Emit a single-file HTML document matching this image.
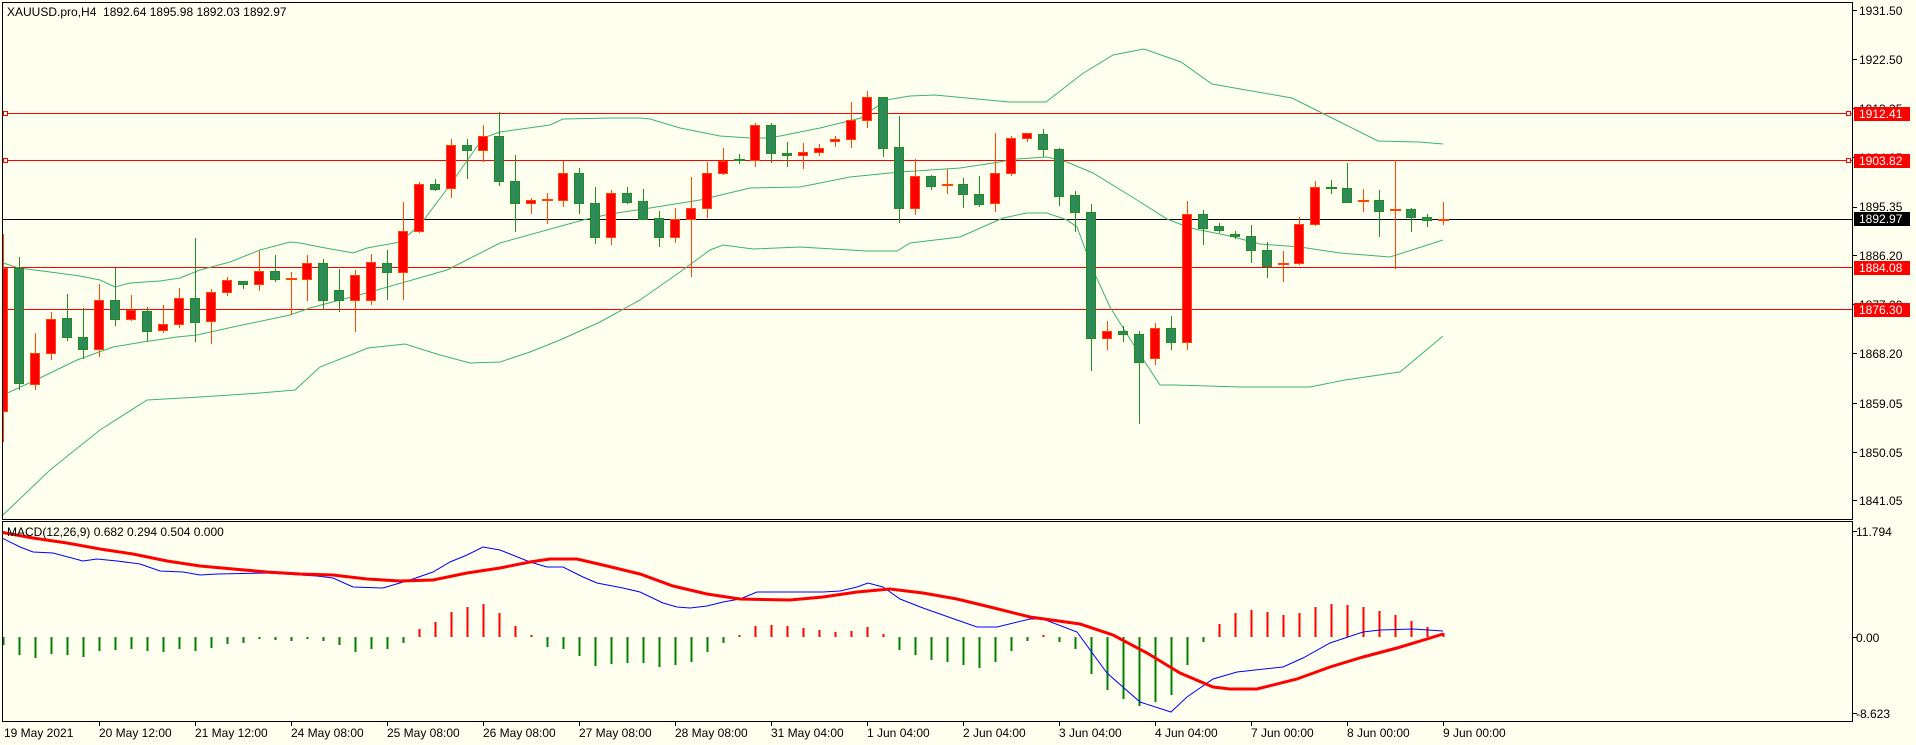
<!DOCTYPE html>
<html><head><meta charset="utf-8"><style>
html,body{margin:0;padding:0;background:#FFFFF0;width:1916px;height:745px;overflow:hidden}
svg{display:block}
text{font-family:"Liberation Sans",Tahoma,sans-serif;font-size:12px;fill:#000}
</style></head><body>
<svg width="1916" height="745" viewBox="0 0 1916 745" xmlns="http://www.w3.org/2000/svg" shape-rendering="crispEdges">
<defs>
<clipPath id="cm"><rect x="3" y="3" width="1849" height="516"/></clipPath>
<clipPath id="cd"><rect x="3" y="522" width="1849" height="199"/></clipPath>
</defs>
<rect width="1916" height="745" fill="#FFFFF0"/>

<g clip-path="url(#cm)">
<g stroke="#FF0000" stroke-width="1">
<path d="M2 113.5H1852M2 160.5H1852M2 267.5H1852M2 309.5H1852"/>
</g>
<path d="M2 219.5H1852" stroke="#000" stroke-width="1"/>
<g fill="none" stroke="#FF0000">
<rect x="3.5" y="111.5" width="4" height="4" fill="#FFFFF0"/>
<rect x="3.5" y="158.5" width="4" height="4" fill="#FFFFF0"/>
<rect x="3.5" y="307.5" width="4" height="4" fill="#fff"/>
<rect x="1846.5" y="111.5" width="4" height="4" fill="#FFFFF0"/>
<rect x="1846.5" y="158.5" width="4" height="4" fill="#FFFFF0"/>
</g>

<g fill="none" stroke="#3CB371" stroke-width="1" shape-rendering="auto">
<polyline points="3,263 19,268 50,272 80,276 100,280 115,287 130,283 160,281 180,278 200,270 230,262 260,250 290,242 300,243 320,247 353,253 367,248 400,242 420,225 450,185 483,138 500,132 550,125 563,119 610,118 640,118 650,119 680,128 700,132 720,136 750,138 770,138 790,134 820,128 861,118 886,100 910,96 935,95 1009,102 1046,102 1082,74 1113,55 1144,49 1181,62 1212,84 1292,98 1322,113 1378,141 1420,142 1443,144"/>
<polyline points="3,395 40,378 77,360 113,347 143,342 177,337 197,335 233,327 290,315 310,308 370,292 447,270 500,243 583,220 610,214 650,208 700,200 750,188 800,187 850,177 900,172 960,168 993,163 1017,159 1047,157 1067,162 1093,173 1137,200 1167,219 1190,228 1230,236 1260,244 1300,247 1340,253 1390,257 1443,240"/>
<polyline points="3,515 50,470 100,430 147,400 200,397 260,393 295,390 320,367 368,348 405,344 440,355 470,363 500,362 530,352 560,340 600,322 640,300 680,272 710,250 723,245 753,249 800,247 867,251 897,251 910,243 960,237 1003,218 1027,213 1047,213 1067,220 1077,227 1093,270 1110,307 1137,350 1160,385 1175,385 1240,387 1310,387 1345,380 1400,372 1443,336"/>
</g>

<path fill="none" stroke="#FF4500" stroke-width="1" d="M3.5 234V442M35.5 333V390M51.5 312V360M99.5 284V357M131.5 295V321M163.5 305V333M179.5 288V328M211.5 289V344M227.5 277V296M259.5 251V291M291.5 272V315M307.5 255V301M355.5 270V332M371.5 254V305M403.5 202V300M419.5 182V233M451.5 139V198M483.5 125V162M531.5 198V214M547.5 193V224M563.5 161V207M611.5 190V245M675.5 208V243M691.5 177V277M707.5 162V218M723.5 148V175M755.5 123V167M803.5 143V169M819.5 144V156M835.5 136V147M851.5 102V148M867.5 91V128M915.5 159V215M947.5 169V194M995.5 133V212M1011.5 136V176M1027.5 133V142M1107.5 321V350M1155.5 323V365M1187.5 201V350M1283.5 251V282M1299.5 217V265M1315.5 181V226M1363.5 189V212M1395.5 160V269M1443.5 202V225"/>
<path fill="none" stroke="#228B22" stroke-width="1" d="M19.5 257V390M67.5 294V341M83.5 308V359M115.5 268V326M147.5 307V341M195.5 238V342M243.5 281V289M275.5 255V282M323.5 259V310M339.5 269V312M387.5 250V300M435.5 179V191M467.5 139V179M499.5 112V186M515.5 155V232M579.5 168V214M595.5 187V244M627.5 187V204M643.5 189V219M659.5 211V247M739.5 154V164M771.5 123V163M787.5 142V167M883.5 97V157M899.5 116V223M931.5 175V190M963.5 178V208M979.5 176V207M1043.5 129V157M1059.5 148V206M1075.5 191V232M1091.5 204V371M1123.5 326V342M1139.5 331V424M1171.5 316V350M1203.5 210V245M1219.5 223V233M1235.5 231V239M1251.5 225V263M1267.5 242V278M1331.5 180V194M1347.5 163V203M1379.5 190V237M1411.5 208V232M1427.5 214V227"/>

<g fill="#FF0000" stroke="#FF4500" stroke-width="1">
<rect x="-1.5" y="268.5" width="9" height="143"/>
<rect x="30.5" y="353.5" width="9" height="31"/>
<rect x="46.5" y="319.5" width="9" height="34"/>
<rect x="94.5" y="300.5" width="9" height="49"/>
<rect x="126.5" y="310.5" width="9" height="9"/>
<rect x="158.5" y="324.5" width="9" height="6"/>
<rect x="174.5" y="298.5" width="9" height="26"/>
<rect x="206.5" y="292.5" width="9" height="29"/>
<rect x="222.5" y="280.5" width="9" height="12"/>
<rect x="254.5" y="271.5" width="9" height="13"/>
<rect x="302.5" y="263.5" width="9" height="16"/>
<rect x="350.5" y="275.5" width="9" height="25"/>
<rect x="366.5" y="262.5" width="9" height="38"/>
<rect x="398.5" y="231.5" width="9" height="41"/>
<rect x="414.5" y="184.5" width="9" height="47"/>
<rect x="446.5" y="145.5" width="9" height="43"/>
<rect x="478.5" y="136.5" width="9" height="14"/>
<rect x="526.5" y="200.5" width="9" height="3"/>
<rect x="558.5" y="173.5" width="9" height="27"/>
<rect x="606.5" y="193.5" width="9" height="44"/>
<rect x="670.5" y="219.5" width="9" height="18"/>
<rect x="686.5" y="208.5" width="9" height="11"/>
<rect x="702.5" y="173.5" width="9" height="35"/>
<rect x="718.5" y="161.5" width="9" height="12"/>
<rect x="750.5" y="125.5" width="9" height="35"/>
<rect x="798.5" y="152.5" width="9" height="3"/>
<rect x="814.5" y="148.5" width="9" height="4"/>
<rect x="830.5" y="139.5" width="9" height="2"/>
<rect x="846.5" y="120.5" width="9" height="19"/>
<rect x="862.5" y="97.5" width="9" height="23"/>
<rect x="910.5" y="176.5" width="9" height="32"/>
<rect x="990.5" y="173.5" width="9" height="30"/>
<rect x="1006.5" y="138.5" width="9" height="35"/>
<rect x="1022.5" y="133.5" width="9" height="5"/>
<rect x="1102.5" y="331.5" width="9" height="7"/>
<rect x="1150.5" y="328.5" width="9" height="30"/>
<rect x="1182.5" y="214.5" width="9" height="128"/>
<rect x="1294.5" y="224.5" width="9" height="39"/>
<rect x="1310.5" y="187.5" width="9" height="37"/>
</g>
<g fill="#2E8B57" stroke="#228B22" stroke-width="1">
<rect x="14.5" y="268.5" width="9" height="115"/>
<rect x="62.5" y="318.5" width="9" height="19"/>
<rect x="78.5" y="337.5" width="9" height="12"/>
<rect x="110.5" y="300.5" width="9" height="19"/>
<rect x="142.5" y="311.5" width="9" height="20"/>
<rect x="190.5" y="298.5" width="9" height="24"/>
<rect x="238.5" y="281.5" width="9" height="3"/>
<rect x="270.5" y="271.5" width="9" height="8"/>
<rect x="318.5" y="263.5" width="9" height="37"/>
<rect x="334.5" y="290.5" width="9" height="10"/>
<rect x="382.5" y="263.5" width="9" height="9"/>
<rect x="430.5" y="184.5" width="9" height="5"/>
<rect x="462.5" y="145.5" width="9" height="5"/>
<rect x="494.5" y="136.5" width="9" height="45"/>
<rect x="510.5" y="181.5" width="9" height="22"/>
<rect x="574.5" y="173.5" width="9" height="30"/>
<rect x="590.5" y="203.5" width="9" height="34"/>
<rect x="622.5" y="193.5" width="9" height="9"/>
<rect x="638.5" y="201.5" width="9" height="18"/>
<rect x="654.5" y="218.5" width="9" height="19"/>
<rect x="766.5" y="125.5" width="9" height="28"/>
<rect x="782.5" y="153.5" width="9" height="2"/>
<rect x="878.5" y="97.5" width="9" height="51"/>
<rect x="894.5" y="147.5" width="9" height="61"/>
<rect x="926.5" y="176.5" width="9" height="10"/>
<rect x="958.5" y="184.5" width="9" height="10"/>
<rect x="974.5" y="194.5" width="9" height="10"/>
<rect x="1038.5" y="134.5" width="9" height="15"/>
<rect x="1054.5" y="149.5" width="9" height="47"/>
<rect x="1070.5" y="195.5" width="9" height="17"/>
<rect x="1086.5" y="212.5" width="9" height="126"/>
<rect x="1118.5" y="331.5" width="9" height="3"/>
<rect x="1134.5" y="334.5" width="9" height="28"/>
<rect x="1166.5" y="328.5" width="9" height="14"/>
<rect x="1198.5" y="214.5" width="9" height="14"/>
<rect x="1214.5" y="226.5" width="9" height="4"/>
<rect x="1230.5" y="234.5" width="9" height="2"/>
<rect x="1246.5" y="236.5" width="9" height="14"/>
<rect x="1262.5" y="250.5" width="9" height="16"/>
<rect x="1342.5" y="188.5" width="9" height="14"/>
<rect x="1374.5" y="200.5" width="9" height="11"/>
<rect x="1406.5" y="209.5" width="9" height="8"/>
<rect x="1422.5" y="217.5" width="9" height="3"/>
</g>
<path fill="none" stroke="#FF4500" stroke-width="2" d="M286 279H297M542 200H553M942 185H953M1278 264H1289M1358 201H1369M1390 210H1401M1438 220H1449"/>
<path fill="none" stroke="#228B22" stroke-width="2" d="M734 160H745M1326 188H1337"/>
</g>

<g clip-path="url(#cd)">
<path fill="none" stroke="#FF0000" stroke-width="2" d="M419.5 637V629M435.5 637V622M451.5 637V612M467.5 637V607M483.5 637V604M499.5 637V613M515.5 637V626M531.5 637V635M739.5 637V635M755.5 637V626M771.5 637V625M787.5 637V626M803.5 637V628M819.5 637V630M835.5 637V632M851.5 637V631M867.5 637V627M883.5 637V634M1043.5 637V635M1219.5 637V624M1235.5 637V613M1251.5 637V610M1267.5 637V612M1283.5 637V615M1299.5 637V613M1315.5 637V607M1331.5 637V604M1347.5 637V605M1363.5 637V607M1379.5 637V611M1395.5 637V615M1411.5 637V621M1427.5 637V627M1443.5 637V633"/>
<path fill="none" stroke="#008000" stroke-width="2" d="M3.5 637V645M19.5 637V655M35.5 637V658M51.5 637V654M67.5 637V655M83.5 637V657M99.5 637V651M115.5 637V650M131.5 637V649M147.5 637V651M163.5 637V652M179.5 637V649M195.5 637V651M211.5 637V648M227.5 637V644M243.5 637V643M259.5 637V639M275.5 637V640M291.5 637V641M307.5 637V639M323.5 637V641M339.5 637V645M355.5 637V652M371.5 637V649M387.5 637V649M403.5 637V643M547.5 637V647M563.5 637V649M579.5 637V656M595.5 637V666M611.5 637V664M627.5 637V663M643.5 637V663M659.5 637V667M675.5 637V665M691.5 637V662M707.5 637V652M723.5 637V643M899.5 637V650M915.5 637V655M931.5 637V660M947.5 637V662M963.5 637V665M979.5 637V668M995.5 637V662M1011.5 637V651M1027.5 637V641M1059.5 637V642M1075.5 637V649M1091.5 637V674M1107.5 637V690M1123.5 637V699M1139.5 637V706M1155.5 637V702M1171.5 637V695M1187.5 637V665M1203.5 637V642"/>
<g fill="none" shape-rendering="auto">
<polyline stroke="#0000FF" stroke-width="1" points="0,537 20,547 33,552 53,553 83,561 97,559 117,561 140,564 160,571 183,572 200,575 217,574 267,573 317,576 333,578 353,587 383,588 410,580 433,572 450,562 467,555 483,547 500,550 530,562 547,567 563,567 583,577 597,583 623,588 640,592 663,603 677,607 690,608 707,606 723,602 740,599 757,592 807,592 823,592 840,591 857,587 868,583 883,587 900,599 923,608 957,620 977,627 997,627 1030,619 1043,619 1077,632 1107,673 1140,702 1171,712 1187,697 1213,679 1237,672 1283,667 1303,658 1330,643 1363,632 1380,630 1413,629 1443,631"/>
<polyline stroke="#FF0000" stroke-width="3" points="0,532 33,538 67,543 100,549 133,554 167,561 200,566 233,569 267,572 300,574 333,575 367,579 400,581 433,580 467,573 500,568 530,562 550,559 577,559 607,566 640,574 673,586 707,594 740,599 790,600 823,597 857,592 890,589 923,593 957,599 990,607 1030,617 1080,624 1113,635 1147,653 1180,673 1213,687 1230,689 1257,689 1297,679 1330,667 1363,657 1397,648 1427,639 1443,634"/>
</g>
</g>

<g fill="none" stroke="#000" stroke-width="1">
<path d="M2.5 2.5H1852.5V519.5H2.5Z"/>
<path d="M2.5 521.5H1852.5V721.5H2.5Z"/>
</g>
<path stroke="#000" stroke-width="1" d="M1852 10.5H1857M1852 59.5H1857M1852 108.5H1857M1852 157.5H1857M1852 207.5H1857M1852 255.5H1857M1852 304.5H1857M1852 353.5H1857M1852 403.5H1857M1852 452.5H1857M1852 500.5H1857M1852 531.5H1857M1852 637.5H1857M1852 713.5H1857"/>
<path stroke="#000" stroke-width="1" d="M99.5 721V726M195.5 721V726M291.5 721V726M387.5 721V726M483.5 721V726M579.5 721V726M675.5 721V726M771.5 721V726M867.5 721V726M963.5 721V726M1059.5 721V726M1155.5 721V726M1251.5 721V726M1347.5 721V726M1443.5 721V726"/>

<g>
<text x="1859" y="15">1931.50</text>
<text x="1859" y="64">1922.50</text>
<text x="1859" y="113">1913.35</text>
<text x="1859" y="162">1904.25</text>
<text x="1859" y="211">1895.35</text>
<text x="1859" y="260">1886.20</text>
<text x="1859" y="309">1877.20</text>
<text x="1859" y="358">1868.20</text>
<text x="1859" y="408">1859.05</text>
<text x="1859" y="457">1850.05</text>
<text x="1859" y="505">1841.05</text>
<text x="1856" y="536">11.794</text>
<text x="1856" y="642">0.00</text>
<text x="1856" y="718">-8.623</text>
</g>
<rect x="1854" y="107" width="56" height="14" fill="#FF0000"/>
<text x="1859" y="118" style="fill:#fff">1912.41</text>
<rect x="1854" y="154" width="56" height="14" fill="#FF0000"/>
<text x="1859" y="165" style="fill:#fff">1903.82</text>
<rect x="1854" y="212" width="56" height="14" fill="#000"/>
<text x="1859" y="223" style="fill:#fff">1892.97</text>
<rect x="1854" y="261" width="56" height="14" fill="#FF0000"/>
<text x="1859" y="272" style="fill:#fff">1884.08</text>
<rect x="1854" y="303" width="56" height="14" fill="#FF0000"/>
<text x="1859" y="314" style="fill:#fff">1876.30</text>

<text x="7" y="16">XAUUSD.pro,H4&#160;&#160;1892.64 1895.98 1892.03 1892.97</text>
<text x="7" y="536">MACD(12,26,9) 0.682 0.294 0.504 0.000</text>

<g>
<text x="4" y="737">19 May 2021</text>
<text x="99" y="737">20 May 12:00</text>
<text x="195" y="737">21 May 12:00</text>
<text x="291" y="737">24 May 08:00</text>
<text x="387" y="737">25 May 08:00</text>
<text x="483" y="737">26 May 08:00</text>
<text x="579" y="737">27 May 08:00</text>
<text x="675" y="737">28 May 08:00</text>
<text x="771" y="737">31 May 04:00</text>
<text x="867" y="737">1 Jun 04:00</text>
<text x="963" y="737">2 Jun 04:00</text>
<text x="1059" y="737">3 Jun 04:00</text>
<text x="1155" y="737">4 Jun 04:00</text>
<text x="1251" y="737">7 Jun 00:00</text>
<text x="1347" y="737">8 Jun 00:00</text>
<text x="1443" y="737">9 Jun 00:00</text>
</g>
</svg>
</body></html>
